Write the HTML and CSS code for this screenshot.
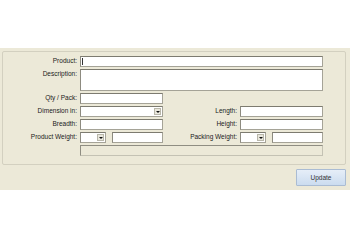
FILE: index.html
```html
<!DOCTYPE html>
<html>
<head>
    <title>Product Details</title>
    <link rel="stylesheet" href="styles.css">
</head>
<body>
    <div class="panel">
        <div class="group">
            <div class="form-grid">
                <label class="lbl">Product:</label>
                <div class="field wide"><span class="caret"></span></div>

                <label class="lbl">Description:</label>
                <div class="field wide"></div>

                <label class="lbl">Qty / Pack:</label>
                <div class="field"></div>
                <div class="empty"></div>
                <div class="empty"></div>

                <label class="lbl">Dimension in:</label>
                <div class="field select"><span class="drop"></span></div>
                <label class="lbl">Length:</label>
                <div class="field"></div>

                <label class="lbl">Breadth:</label>
                <div class="field"></div>
                <label class="lbl">Height:</label>
                <div class="field"></div>

                <label class="lbl">Product Weight:</label>
                <div class="pair">
                    <div class="field select small"><span class="drop"></span></div>
                    <div class="field grow"></div>
                </div>
                <label class="lbl">Packing Weight:</label>
                <div class="pair">
                    <div class="field select small"><span class="drop"></span></div>
                    <div class="field grow"></div>
                </div>

                <div class="empty"></div>
                <div class="field wide disabled"></div>
            </div>
        </div>
        <div class="actions">
            <button class="btn">Update</button>
        </div>
    </div>
</body>
</html>
```

FILE: styles.css
```css
body {
    margin: 0;
    background: #ffffff;
    font-family: "Liberation Sans", Arial, sans-serif;
    font-size: 6.5px;
    color: #1a1a1a;
}
.panel {
    margin-top: 48px;
    height: 142px;
    box-sizing: border-box;
    background: #ece9d8;
    padding: 3px 4px 0 2px;
}
.group {
    height: 114px;
    box-sizing: border-box;
    border: 1px solid #d3d0c0;
    border-radius: 2px;
    padding-top: 4px;
}
.form-grid {
    display: grid;
    grid-template-columns: 74px 83px 71px 83px;
    grid-template-rows: 11px 22px 11px 11px 11px 11px 11px;
    column-gap: 3px;
    row-gap: 2px;
}
.lbl {
    text-align: right;
    line-height: 9px;
    white-space: nowrap;
}
.field {
    box-sizing: border-box;
    background: #fff;
    border: 1px solid #a5a397;
    border-top-color: #7d7b70;
    border-left-color: #8d8b80;
    position: relative;
}
.wide {
    grid-column: 2 / 5;
}
.caret {
    position: absolute;
    left: 1px;
    top: 1px;
    width: 1px;
    height: 7px;
    background: #333;
}
.pair {
    display: flex;
    gap: 6px;
}
.small {
    width: 26px;
    flex: none;
}
.grow {
    flex: 1;
}
.drop {
    position: absolute;
    right: 1px;
    top: 1px;
    width: 7px;
    height: 7px;
    box-sizing: border-box;
    background: #e9e7dc;
    border: 1px solid #b9b7aa;
}
.drop::after {
    content: "";
    position: absolute;
    left: 1px;
    top: 2px;
    border-left: 2px solid transparent;
    border-right: 2px solid transparent;
    border-top: 2px solid #111;
}
.disabled {
    background: #ece9d8;
    border-color: #c4c2b4;
    border-top-color: #8f8d82;
    border-left-color: #8f8d82;
}
.actions {
    display: flex;
    justify-content: flex-end;
    margin-top: 4px;
}
.btn {
    width: 50px;
    height: 17px;
    padding: 0;
    font-family: "Liberation Sans", Arial, sans-serif;
    font-size: 6.5px;
    color: #333;
    background: linear-gradient(#e6eef8, #cbdcef);
    border: 1px solid #aabcd3;
    border-radius: 1px;
}
```
